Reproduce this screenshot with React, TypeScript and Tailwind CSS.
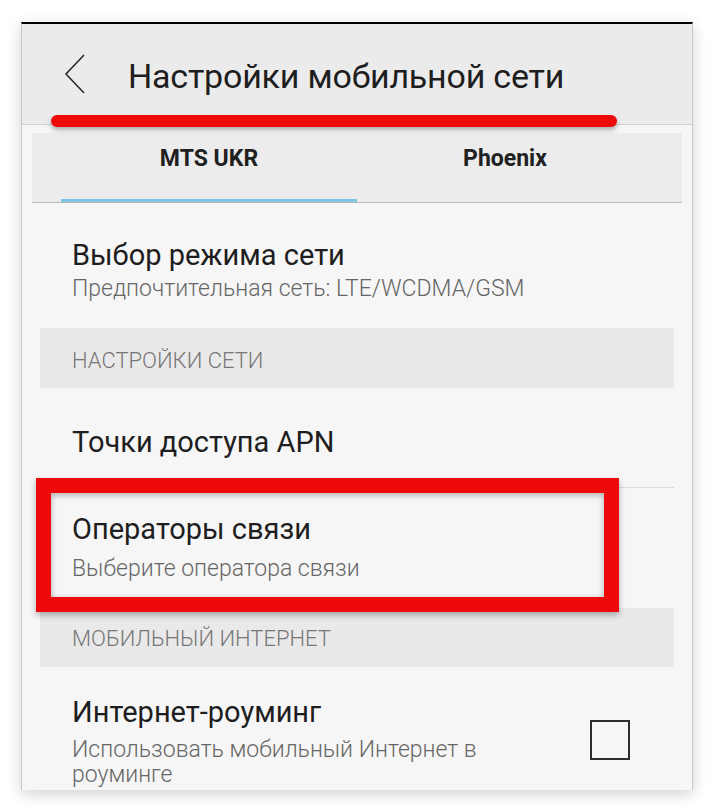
import React from "react";

const font = { fontFamily: "Roboto, 'Noto Sans', sans-serif" };

const SectionHeader = ({ label, className }: { label: string; className: string }) => (
  <div className={`mx-[18px] bg-[#e9e9e9] pl-[32px] text-[22px] leading-[26px] text-[#777777] ${className}`}>
    {label}
  </div>
);

const App = () => {
  return (
    <div className="relative h-[812px] w-[714px] overflow-hidden bg-white pt-[22px] pl-[21px]" style={font}>
      {/* phone screenshot */}
      <div className="relative h-[768px] w-[672px] overflow-hidden border-x border-t-2 border-x-[#c9c9c9] border-t-black bg-[#f6f6f6] shadow-[0_4px_14px_rgba(0,0,0,0.18)]">
        {/* Header */}
        <div className="flex h-[101px] items-start border-b border-[#cfcfcf] bg-[#ebebeb]">
          <svg className="ml-[41px] mt-[29px]" width="24" height="42" viewBox="0 0 24 42" fill="none">
            <polyline points="21,2 3,21 21,40" stroke="#2a2a2a" strokeWidth="1.6" strokeLinejoin="miter" />
          </svg>
          <h1 className="ml-[41px] mt-[35px] text-[34px] font-normal leading-[34px] tracking-[-0.2px] text-[#1e1e1e]">
            Настройки мобильной сети
          </h1>
        </div>

        {/* Tabs */}
        <div className="mx-[10px] mt-[8px] flex h-[70px] border-b border-[#b9b9b9] bg-[#ececec] px-[29px]">
          <div className="relative flex flex-1 items-start justify-center pt-[12px] text-[23px] font-bold leading-[27px] text-[#202020]">
            MTS UKR
            <div className="absolute bottom-0 left-0 right-0 h-[3px] bg-[#7dc5e6]" />
          </div>
          <div className="flex flex-1 items-start justify-center pt-[12px] text-[23px] font-bold leading-[27px] text-[#202020]">
            Phoenix
          </div>
        </div>

        {/* Network mode */}
        <div className="mx-[18px] h-[125px] pl-[32px] pt-[35px]">
          <div className="text-[29px] leading-[34px] text-[#1e1e1e]">Выбор режима сети</div>
          <div className="mt-[4px] text-[23px] font-light leading-[26px] text-[#666666]">
            Предпочтительная сеть: LTE/WCDMA/GSM
          </div>
        </div>

        <SectionHeader label="НАСТРОЙКИ СЕТИ" className="h-[60px] pt-[20px] font-light" />

        <div className="mx-[18px] h-[100px] border-b border-[#dadada] pl-[32px] pt-[37px]">
          <div className="text-[29px] leading-[34px] text-[#1e1e1e]">Точки доступа APN</div>
        </div>

        <div className="mx-[18px] h-[120px] pl-[32px] pt-[24px]">
          <div className="text-[29px] leading-[34px] text-[#1e1e1e]">Операторы связи</div>
          <div className="mt-[10px] text-[23px] font-light leading-[26px] text-[#666666]">Выберите оператора связи</div>
        </div>

        <SectionHeader label="МОБИЛЬНЫЙ ИНТЕРНЕТ" className="h-[59px] pt-[18px] font-light" />

        <div className="mx-[18px] flex justify-between pl-[32px] pr-[44px] pt-[28px]">
          <div className="w-[460px]">
            <div className="text-[29px] leading-[34px] text-[#1e1e1e]">Интернет-роуминг</div>
            <div className="mt-[8px] text-[23px] font-light leading-[25px] text-[#666666]">
              Использовать мобильный Интернет в роуминге
            </div>
          </div>
          <div className="mt-[25px] h-[40px] w-[40px] border-2 border-[#2e2e2e]" />
        </div>
      </div>

      {/* Red annotations */}
      <div className="absolute left-[51px] top-[115px] h-[12px] w-[566px] rounded-full bg-[#ee0a0a] shadow-[0_3px_5px_rgba(0,0,0,0.3)]" />
      <div className="absolute left-[36px] top-[478px] h-[134px] w-[583px] border-[15px] border-[#ee0a0a] shadow-[0_3px_6px_rgba(0,0,0,0.3),inset_0_2px_6px_rgba(0,0,0,0.3)]" />
    </div>
  );
};

export default App;
